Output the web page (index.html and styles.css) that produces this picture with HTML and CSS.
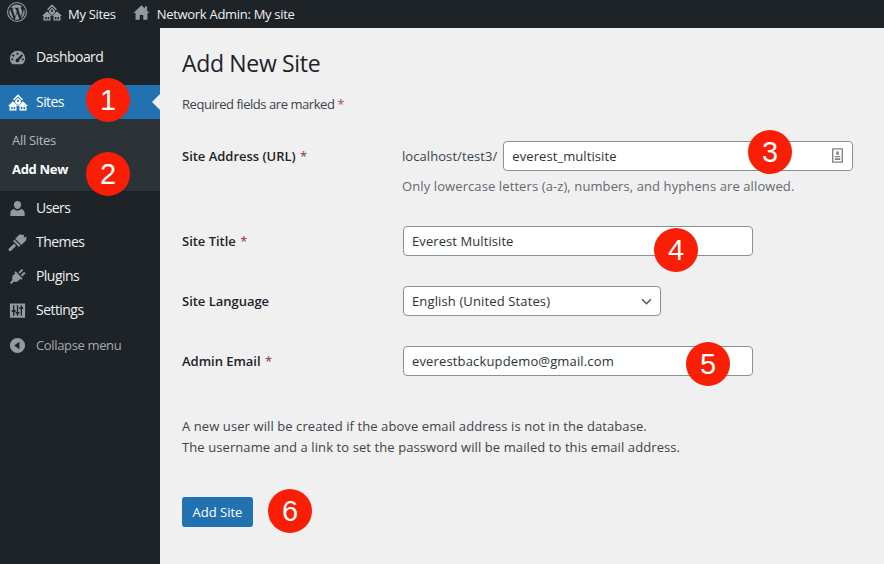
FILE: index.html
```html
<!DOCTYPE html>
<html lang="en">

<head>
    <meta charset="UTF-8">
    <meta name="viewport" content="width=device-width, initial-scale=1.0">
    <title>Add New Site</title>
    <link rel="stylesheet" href="styles.css">
</head>

<body>
    <div class="topbar">
        <a class="top-item top-logo">
            <svg class="top-icon logo-icon" viewBox="0 0 20 20"><path fill-rule="evenodd" d="M10 0a10 10 0 1 0 0 20a10 10 0 0 0 0-20zm0 1.100a8.900 8.900 0 1 1 0 17.800a8.900 8.900 0 0 1 0-17.800z"/><path d="M2.400 10c0 3 1.700 5.600 4.300 6.900L3.100 6.900C2.600 7.800 2.400 8.900 2.400 10zM15.100 9.600c0-.9-.3-1.600-.6-2.100-.4-.6-.7-1.100-.7-1.700 0-.7.5-1.300 1.200-1.300h.1A7.600 7.600 0 0 0 3.600 5.900h.5c.8 0 2-.1 2-.1.4 0 .5.600.1.600 0 0-.4.100-.9.100l2.800 8.400 1.700-5.100-1.200-3.300c-.4 0-.8-.1-.8-.1-.4 0-.4-.6 0-.6 0 0 1.300.1 2 .1.800 0 2-.1 2-.1.400 0 .5.600.1.600 0 0-.4.100-.9.100l2.800 8.300.8-2.600c.3-1.100.6-1.900.6-2.600zM10.100 10.700l-2.300 6.700a7.600 7.600 0 0 0 4.700-.1l-.1-.1zM16.700 6.400l.1.800c0 .8-.1 1.600-.6 2.800l-2.300 6.700A7.600 7.600 0 0 0 16.700 6.400z"/></svg>
        </a>
        <a class="top-item top-sites">
            <svg class="top-icon sites-icon" viewBox="0 0 24 20"><use href="#houses"/></svg>
            My Sites
        </a>
        <a class="top-item">
            <svg class="top-icon home-icon" viewBox="0 0 20 20"><path d="M10 1.500 0.500 10.500h2.500V18.500h5v-5.500h4v5.500h5V10.500h2.500l-3-2.800V3h-2.500v2.300z"/></svg>
            Network Admin: My site
        </a>
    </div>

    <svg class="svg-defs" aria-hidden="true">
        <symbol id="houses" viewBox="0 0 24 20">
            <path d="M12 0 6 6 7.400 7.300 12 2.800l4.600 4.500L18 6zM12 4.200 8.300 7.900v2L12 13.200l3.700-3.300v-2zM11 6.800h2v2.700h-2zM6 8.600 0 14.300h1.800V20h8.400v-5.700H12L8.300 10.900zM3.800 15.300h1.800V18H3.800zM6.800 15.300h1.800V18H6.800zM18 8.600l-2.300 2.300-3.700 3.400h1.800V20h8.400v-5.700H24zM15.400 15.300h1.800V18h-1.800zM18.600 15.300h1.800V18h-1.800z"/>
        </symbol>
    </svg>

    <div class="layout">
        <nav class="sidebar">
            <a class="menu-item">
                <svg class="menu-icon" viewBox="0 0 20 20"><path fill-rule="evenodd" d="M10 3a8 8 0 0 0-8 8c0 2.400 1 4.500 2.700 6h10.600A8 8 0 0 0 10 3zM9 5h2v2H9zM5.500 6.500l1.500 1.500-1.400 1.400-1.500-1.500zM14.500 6.500l1.400 1.400-4 4.800a2 2 0 1 1-2.100-1.600zM3.500 11h2v2h-2zM14.500 11h2v2h-2z"/></svg>
                Dashboard
            </a>
            <a class="menu-item menu-current">
                <svg class="menu-icon sites-menu-icon" viewBox="0 0 24 20"><use href="#houses"/></svg>
                Sites
            </a>
            <div class="submenu">
                <a class="sub-item">All Sites</a>
                <a class="sub-item sub-current">Add New</a>
            </div>
            <a class="menu-item">
                <svg class="menu-icon" viewBox="0 0 20 20"><path d="M10 2a3.800 3.800 0 0 0-3.800 4c0 2.300 1.700 4.500 3.800 4.500s3.800-2.200 3.800-4.500A3.800 3.800 0 0 0 10 2zM6.300 10.500C4 11.200 2.500 12.500 2.500 14.500V18h15v-3.500c0-2-1.500-3.300-3.800-4-1 1-2.300 1.600-3.700 1.600s-2.700-.6-3.700-1.600z"/></svg>
                Users
            </a>
            <a class="menu-item">
                <svg class="menu-icon" viewBox="0 0 20 20"><path d="M12 1.500 7.500 6l6.500 6.500L19 8l.5-4.500-3 1.500.5-3zM6.800 7 5.300 8.500l6.200 6.200 1.500-1.500zM6.300 11.200 1 16.300a1.700 1.700 0 0 0 2.400 2.400l5.200-5.200z"/></svg>
                Themes
            </a>
            <a class="menu-item">
                <svg class="menu-icon" viewBox="0 0 20 20"><path d="M14.500 2 11 5.500l1.500 1.500L16 3.500zM17 5l-3.500 3.500 1.500 1.500L18.500 6.500zM8 4.500 6.800 5.700l.9.900-2.200 2.200c-1.300 1.400-1.500 3.100-.7 4.600L2 16.500 3.500 18l3-2.700c1.500.8 3.200.6 4.500-.7l2.200-2.200.9.900 1.200-1.200z"/></svg>
                Plugins
            </a>
            <a class="menu-item">
                <svg class="menu-icon" viewBox="0 0 20 20"><path fill-rule="evenodd" d="M2 2.500h16v15H2zM5.300 4.500v5H4v2h1.300v4h1.400v-4H8v-2H6.700v-5zM9.300 4.500v7H8v2h1.300v2h1.400v-2H12v-2h-1.300v-7zM13.300 4.500v2H12v2h1.300v7h1.400v-7H16v-2h-1.300v-2z"/></svg>
                Settings
            </a>
            <a class="menu-item menu-collapse">
                <svg class="menu-icon" viewBox="0 0 20 20"><path fill-rule="evenodd" d="M10 2a8 8 0 1 0 0 16a8 8 0 0 0 0-16zM12 6v8L6.500 10z"/></svg>
                Collapse menu
            </a>
        </nav>

        <main class="content">
            <h1>Add New Site</h1>
            <p class="required-note">Required fields are marked <span class="star">*</span></p>

            <form class="site-form">
                <div class="form-row">
                    <label class="form-label">Site Address (URL) <span class="star">*</span></label>
                    <div>
                        <div class="address-line">
                            <span class="address-prefix">localhost/test3/</span>
                            <span class="input-wrap">
                                <input class="text-input input-wide" type="text" value="everest_multisite">
                                <svg class="card-icon" viewBox="0 0 12 16"><path fill-rule="evenodd" d="M1 0h10a1 1 0 0 1 1 1v14a1 1 0 0 1-1 1H1a1 1 0 0 1-1-1V1a1 1 0 0 1 1-1zM1.500 1.500v13h9v-13zM6 3.500a1.500 1.500 0 0 1 1.500 1.800L7 7.500H5l-.5-2.200A1.500 1.500 0 0 1 6 3.500zM3 8.500h6v1.500H3zM3 11h6v2H3z"/></svg>
                            </span>
                        </div>
                        <p class="help-text">Only lowercase letters (a-z), numbers, and hyphens are allowed.</p>
                    </div>
                </div>
                <div class="form-row">
                    <label class="form-label">Site Title <span class="star">*</span></label>
                    <input class="text-input input-wide field-start" type="text" value="Everest Multisite">
                </div>
                <div class="form-row">
                    <label class="form-label">Site Language</label>
                    <div class="select-box field-start">
                        English (United States)
                        <svg class="select-arrow" viewBox="0 0 12 8"><path d="M1 1.500 6 6.500 11 1.500" fill="none" stroke="#50575e" stroke-width="1.800"/></svg>
                    </div>
                </div>
                <div class="form-row">
                    <label class="form-label">Admin Email <span class="star">*</span></label>
                    <input class="text-input input-wide input-email field-start" type="text" value="everestbackupdemo@gmail.com">
                </div>
            </form>

            <p class="user-note">A new user will be created if the above email address is not in the database.<br>The username and a link to set the password will be mailed to this email address.</p>

            <button class="button-primary" type="button">Add Site</button>
        </main>
    </div>

    <span class="badge badge-1">1</span>
    <span class="badge badge-2">2</span>
    <span class="badge badge-3">3</span>
    <span class="badge badge-4">4</span>
    <span class="badge badge-5">5</span>
    <span class="badge badge-6">6</span>
</body>

</html>
```

FILE: styles.css
```css
/* General Page Styles */
html,
body {
    height: 100%;
}

body {
    margin: 0;
    position: relative;
    overflow: hidden;
    font-family: 'Open Sans', 'Noto Sans', sans-serif;
    font-size: 13px;
    line-height: 20px;
    color: #3c434a;
    background-color: #f0f0f1;
}

.svg-defs {
    display: none;
}

/* Top bar */
.topbar {
    display: flex;
    height: 28px;
    background-color: #1d2327;
    color: #f0f0f1;
}

.top-item {
    display: flex;
    align-items: center;
    gap: 6px;
    padding-right: 18px;
    font-size: 13px;
    letter-spacing: -0.3px;
}

.top-logo {
    padding-left: 7px;
    padding-right: 15px;
}

.top-sites {
    padding-right: 17px;
}

.top-icon {
    width: 20px;
    height: 20px;
    fill: #949a9f;
}

.logo-icon {
    margin-top: -4px;
}

.sites-icon {
    width: 20px;
    height: 17px;
    margin-top: -4px;
}

.home-icon {
    width: 17px;
    height: 17px;
    margin-top: -3px;
    margin-right: 1px;
}

/* Sidebar */
.layout {
    display: flex;
    height: 536px;
}

.sidebar {
    width: 160px;
    flex-shrink: 0;
    padding-top: 12px;
    box-sizing: border-box;
    background-color: #1d2327;
}

.menu-item {
    display: flex;
    align-items: center;
    gap: 9px;
    height: 34px;
    padding-left: 8px;
    font-size: 14px;
    letter-spacing: -0.55px;
    color: #f0f0f1;
}

.menu-item:first-child {
    margin-bottom: 11px;
}

.menu-icon {
    width: 19px;
    height: 19px;
    flex-shrink: 0;
    fill: #949a9f;
}

.sites-menu-icon {
    width: 20px;
    height: 17px;
    margin-right: -1px;
}

.menu-current {
    position: relative;
    background-color: #2271b1;
    color: #fff;
}

.menu-current .menu-icon {
    fill: #fff;
}

/* little notch pointing at the content */
.menu-current::after {
    content: "";
    position: absolute;
    right: 0;
    top: 9px;
    border: 8px solid transparent;
    border-left-width: 0;
    border-right-color: #f0f0f1;
}

.submenu {
    height: 72px;
    padding-top: 7px;
    box-sizing: border-box;
    background-color: #2c3338;
}

.sub-item {
    display: block;
    height: 29px;
    line-height: 29px;
    padding-left: 12px;
    letter-spacing: -0.3px;
    color: #b4b9be;
}

.sub-current {
    font-weight: 700;
    color: #fff;
}

.menu-collapse {
    padding-top: 2px;
    box-sizing: border-box;
    font-size: 13px;
    letter-spacing: -0.35px;
    color: #a7aaad;
}

/* Main content */
.content {
    flex: 1;
    padding: 20px 0 0 22px;
}

h1 {
    margin: 0;
    font-size: 23px;
    font-weight: 400;
    line-height: 30px;
    letter-spacing: -0.33px;
    color: #1d2327;
}

.required-note {
    margin: 16px 0 27px;
    letter-spacing: -0.45px;
}

.star {
    color: #a05050;
}

/* Form */
.form-row {
    display: grid;
    grid-template-columns: 220px 1fr;
    margin-bottom: 30px;
}

.form-label {
    font-weight: 600;
    line-height: 30px;
    letter-spacing: -0.02px;
    color: #1d2327;
}

.form-label .star {
    margin-left: 1px;
}

.field-start {
    margin-left: 1px;
}

.address-line {
    display: flex;
    align-items: center;
    gap: 6px;
}

.address-prefix {
    letter-spacing: 0.07px;
}

.input-wrap {
    position: relative;
    display: block;
}

.text-input {
    display: block;
    box-sizing: border-box;
    height: 30px;
    padding: 0 8px;
    border: 1px solid #8c8f94;
    border-radius: 4px;
    background-color: #fff;
    font-family: inherit;
    font-size: 13px;
    letter-spacing: 0.08px;
    color: #2c3338;
}

.input-wide {
    width: 350px;
}

.input-email {
    letter-spacing: 0.15px;
}

.card-icon {
    position: absolute;
    right: 10px;
    top: 7px;
    width: 11px;
    height: 15px;
    fill: #7f8388;
}

.help-text {
    margin: 5px 0 0;
    letter-spacing: 0.1px;
    color: #646970;
}

.select-box {
    display: flex;
    align-items: center;
    justify-content: space-between;
    box-sizing: border-box;
    width: 258px;
    height: 30px;
    padding: 0 8px;
    border: 1px solid #8c8f94;
    border-radius: 4px;
    background-color: #fff;
    letter-spacing: 0.13px;
    color: #2c3338;
}

.select-arrow {
    width: 11px;
    height: 7px;
}

.user-note {
    margin: 40px 0 39px;
    line-height: 21px;
    letter-spacing: 0.09px;
}

.button-primary {
    display: block;
    width: 71px;
    height: 30px;
    padding: 0;
    border: 0;
    border-radius: 3px;
    background-color: #2271b1;
    font-family: inherit;
    font-size: 13px;
    color: #fff;
}

/* Numbered callouts that sit over the page */
.badge {
    position: absolute;
    width: 44px;
    height: 44px;
    margin: -22px 0 0 -22px;
    border-radius: 50%;
    background-color: #f91e05;
    color: #fff;
    font-family: 'Liberation Sans', sans-serif;
    font-size: 29px;
    line-height: 44px;
    text-align: center;
}

.badge-1 { left: 108px; top: 100px; }
.badge-2 { left: 108px; top: 174px; }
.badge-3 { left: 770px; top: 152px; }
.badge-4 { left: 676px; top: 250px; }
.badge-5 { left: 708px; top: 364px; }
.badge-6 { left: 290px; top: 511px; }
```
